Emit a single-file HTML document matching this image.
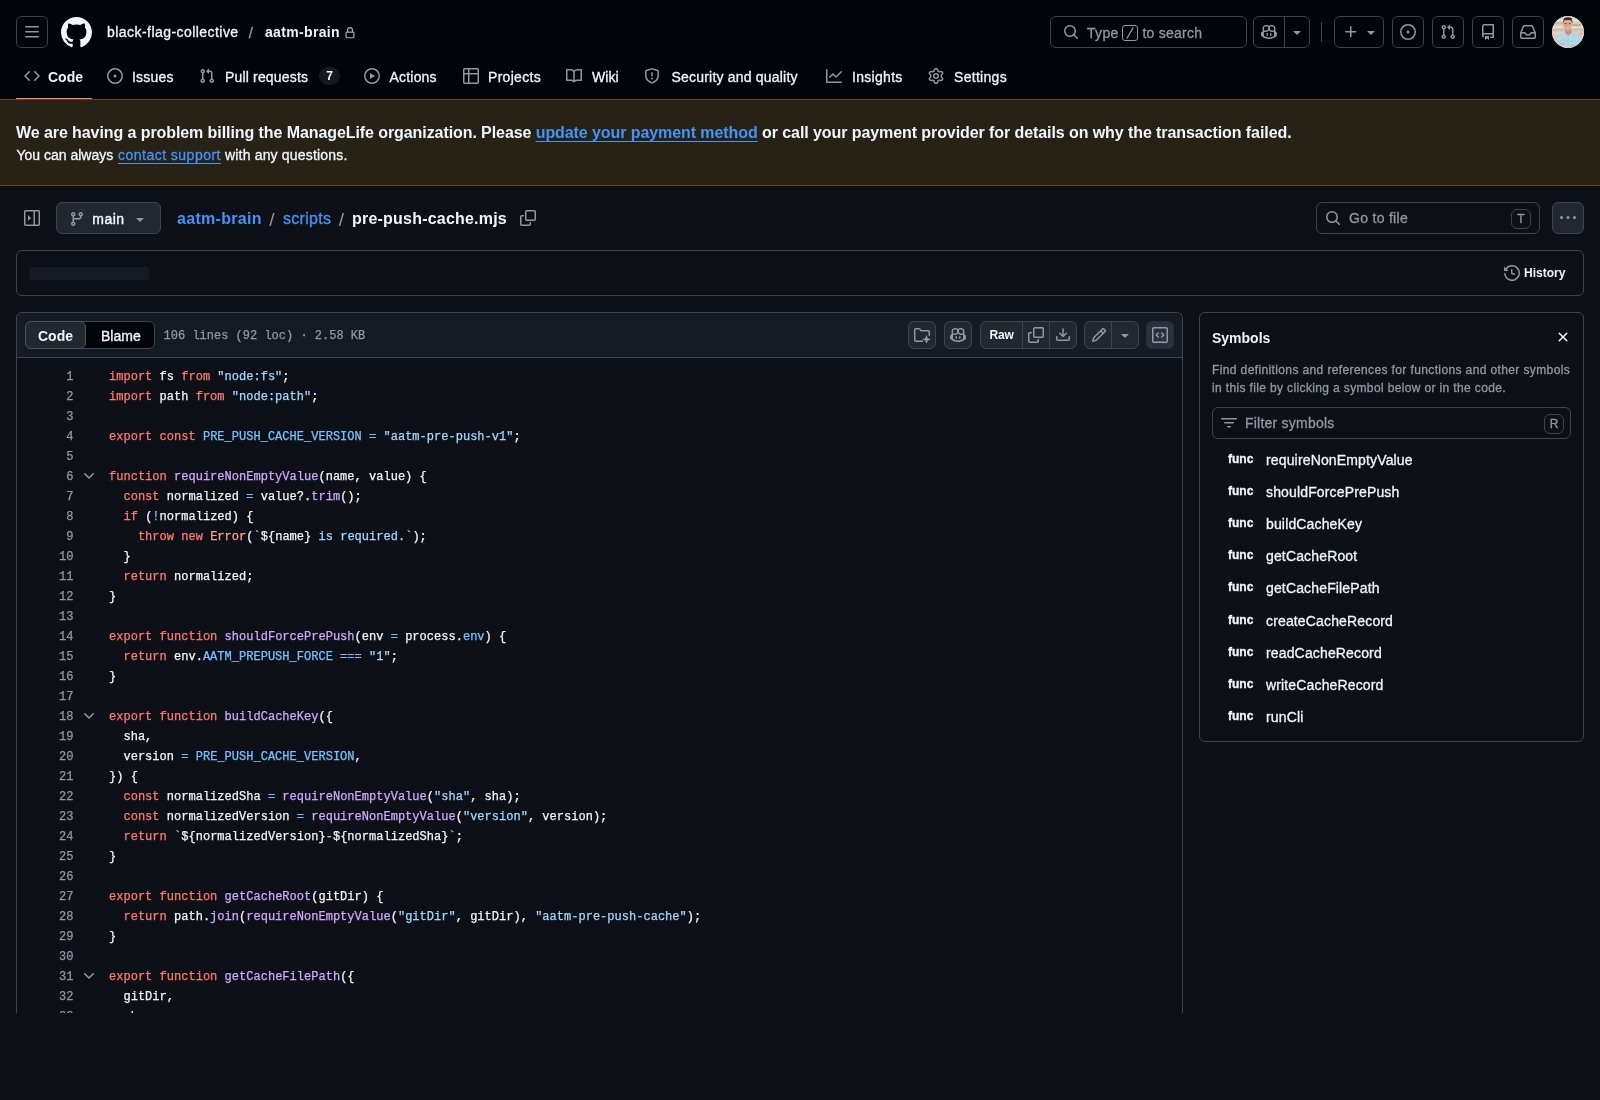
<!DOCTYPE html>
<html><head><meta charset="utf-8"><title>pre-push-cache.mjs</title>
<style>
*{box-sizing:border-box;margin:0;padding:0}
html,body{width:1600px;height:1100px;overflow:hidden;background:#0d1117;color:#f0f6fc;font-family:"Liberation Sans",sans-serif;font-size:14px;-webkit-text-stroke:.3px}
.abs{position:absolute}
svg{display:block;fill:currentColor}
.t{position:absolute;white-space:nowrap;line-height:20px}
.mut{color:#9198a1}
.b{font-weight:bold;-webkit-text-stroke:0}
.link{color:#4493f8}
/* header */
#hdr{position:absolute;left:0;top:0;width:1600px;height:99px;background:#010409}
.hbtn{position:absolute;top:16px;height:32px;border:1px solid #3d444d;border-radius:6px;color:#9198a1}
.hbtn svg{position:absolute}
.nav{position:absolute;top:66px;height:20px;line-height:20px;white-space:nowrap;color:#f0f6fc}
.nav svg{position:absolute;top:2px;color:#9198a1}
.nav span{top:1px}
/* banner */
#ban{position:absolute;left:0;top:99px;width:1600px;height:87px;background:#272215;border-top:1px solid #634814;border-bottom:1px solid #634814}
/* generic box */
.box{position:absolute;border:1px solid #3d444d;border-radius:6px}
.btn{position:absolute;background:#212830;border:1px solid #3d444d;border-radius:6px}
.kbd{position:absolute;border:1px solid #3d444d;border-radius:4px;color:#9198a1;font-size:11px;text-align:center}
/* code */
#code{position:absolute;left:16px;top:312px;width:1167px;height:701px;border:1px solid #3d444d;border-bottom:none;border-radius:6px 6px 0 0;overflow:hidden}
#chead{position:absolute;left:0;top:0;width:1165px;height:45px;background:#151b23;border-bottom:1px solid #3d444d}
pre{font-family:"Liberation Mono",monospace;font-size:12px;line-height:20px;-webkit-text-stroke:.25px}
#ln{position:absolute;left:0;top:54px;width:56.5px;text-align:right;color:#9198a1}
#src{position:absolute;left:92px;top:54px;color:#f0f6fc;letter-spacing:0.02px}
.e{color:#ffa198}.k{color:#ff7b72}.s{color:#a5d6ff}.c{color:#79c0ff}.f{color:#d2a8ff}
.chev{position:absolute;left:64px;color:#9198a1}
.ib{position:absolute;top:8px;height:28px;background:#212830;border:1px solid #3d444d;border-radius:6px;color:#9198a1}
.ib svg{position:absolute;top:5px}
/* symbols */
#sym{position:absolute;left:1199px;top:312px;width:385px;height:430px;border:1px solid #3d444d;border-radius:6px}
.fn{position:absolute;left:28px;font-size:12px;font-weight:bold;line-height:20px}
.sn{position:absolute;left:66px;font-size:14px;line-height:20px;white-space:nowrap;letter-spacing:.15px}
</style></head><body>
<div id="root" style="position:absolute;left:0;top:0;width:1600px;height:1100px;will-change:transform">

<!-- HEADER -->
<div id="hdr">
  <div class="hbtn" style="left:16px;width:32px"><svg style="left:7px;top:7px" width="16" height="16" viewBox="0 0 16 16"><path d="M1 2.75A.75.75 0 0 1 1.750 2h12.500a.75.75 0 0 1 0 1.500H1.750A.75.75 0 0 1 1 2.750Zm0 5A.75.75 0 0 1 1.750 7h12.500a.75.75 0 0 1 0 1.500H1.750A.75.75 0 0 1 1 7.750ZM1.750 12h12.500a.75.75 0 0 1 0 1.500H1.750a.75.75 0 0 1 0-1.500Z"/></svg></div>
  <svg class="abs" style="left:60.500px;top:17px;color:#f0f6fc" width="31" height="31" viewBox="0 0 16 16"><path d="M8 0c4.42 0 8 3.58 8 8a8.013 8.013 0 0 1-5.450 7.590c-.4.080-.550-.170-.550-.380 0-.270.010-1.130.010-2.200 0-.750-.250-1.230-.540-1.480 1.780-.2 3.650-.880 3.650-3.950 0-.880-.310-1.590-.820-2.150.080-.2.360-1.020-.080-2.120 0 0-.670-.220-2.200.820-.640-.180-1.320-.270-2-.270-.680 0-1.360.090-2 .270-1.530-1.030-2.200-.820-2.200-.820-.440 1.100-.160 1.920-.080 2.120-.510.560-.820 1.280-.820 2.150 0 3.060 1.860 3.750 3.640 3.950-.230.2-.440.550-.510 1.070-.460.210-1.610.550-2.330-.660-.150-.240-.6-.830-1.230-.820-.670.010-.270.380.010.530.340.190.730.9.820 1.130.160.450.680 1.310 2.690.940 0 .670.010 1.300.010 1.490 0 .210-.150.450-.550.380A7.995 7.995 0 0 1 0 8c0-4.420 3.580-8 8-8Z"/></svg>
  <div class="t" style="left:107px;top:22px;letter-spacing:.45px">black-flag-collective</div>
  <div class="t mut" style="left:248.700px;top:22.500px;font-size:15px">/</div>
  <div class="t b" style="left:265px;top:22px;letter-spacing:.33px">aatm-brain</div>
  <svg class="abs" style="left:344px;top:26.500px;color:#a9b0ba" width="12" height="12" viewBox="0 0 16 16"><path d="M4 4a4 4 0 0 1 8 0v2h.250c.966 0 1.750.784 1.750 1.750v5.500A1.750 1.750 0 0 1 12.250 15h-8.500A1.750 1.750 0 0 1 2 13.250v-5.500C2 6.784 2.784 6 3.750 6H4Zm8.250 3.500h-8.500a.25.25 0 0 0-.250.250v5.500c0 .138.112.250.250.250h8.500a.25.25 0 0 0 .250-.250v-5.500a.25.25 0 0 0-.250-.250ZM10.500 6V4a2.500 2.500 0 1 0-5 0v2Z"/></svg>

  <!-- search -->
  <div class="hbtn" style="left:1050px;width:197px">
    <svg style="left:12px;top:7px" width="16" height="16" viewBox="0 0 16 16"><path d="M10.680 11.740a6 6 0 0 1-7.922-8.982 6 6 0 0 1 8.982 7.922l3.040 3.040a.749.749 0 0 1-.326 1.275.749.749 0 0 1-.734-.215ZM11.500 7a4.499 4.499 0 1 0-8.997 0A4.499 4.499 0 0 0 11.500 7Z"/></svg>
    <div class="t" style="left:36px;top:6px;letter-spacing:.33px">Type</div>
    <div class="kbd" style="left:71px;top:8px;width:16px;height:16px;line-height:14px;border-color:#9198a1;border-radius:3px;font-size:13px"><svg width="14" height="14" viewBox="0 0 14 14" style="position:absolute;left:0;top:0"><path d="M4 12.300 L10 1.900" stroke="#9198a1" stroke-width="1.250" fill="none" stroke-linecap="round"/></svg></div>
    <div class="t" style="left:91.4px;top:6px;letter-spacing:.25px">to search</div>
  </div>
  <!-- copilot group -->
  <div class="hbtn" style="left:1253px;width:57px">
    <div class="abs" style="left:30px;top:0;width:1px;height:30px;background:#3d444d"></div>
    <svg style="left:7px;top:7px" width="16" height="16" viewBox="0 0 16 16"><path d="M7.998 15.035c-4.562 0-7.873-2.914-7.998-3.749V9.338c.085-.628.677-1.686 1.588-2.065.013-.07.024-.143.036-.218.029-.183.06-.384.126-.612-.201-.508-.254-1.084-.254-1.656 0-.87.128-1.769.693-2.484.579-.733 1.494-1.124 2.724-1.261 1.206-.134 2.262.034 2.944.765.05.053.096.108.139.165.044-.057.094-.112.143-.165.682-.731 1.738-.899 2.944-.765 1.230.137 2.145.528 2.724 1.261.566.715.693 1.614.693 2.484 0 .572-.053 1.148-.254 1.656.066.228.098.429.126.612.012.076.024.148.037.218.924.385 1.522 1.471 1.591 2.095v1.872c0 .766-3.351 3.795-8.002 3.795Zm0-1.485c2.280 0 4.584-1.110 5.002-1.433V7.862l-.023-.116c-.49.21-1.075.291-1.727.291-1.146 0-2.059-.327-2.710-.991A3.222 3.222 0 0 1 8 6.303a3.240 3.240 0 0 1-.544.743c-.65.664-1.563.991-2.710.991-.652 0-1.236-.081-1.727-.291l-.023.116v4.255c.419.323 2.722 1.433 5.002 1.433ZM6.762 2.830c-.193-.206-.637-.413-1.682-.297-1.019.113-1.479.404-1.713.7-.247.312-.369.789-.369 1.554 0 .793.129 1.171.308 1.371.162.181.519.379 1.442.379.853 0 1.339-.235 1.638-.54.315-.322.527-.827.617-1.553.117-.935-.037-1.395-.241-1.614Zm4.155-.297c-1.044-.116-1.488.091-1.681.297-.204.219-.359.679-.242 1.614.091.726.303 1.231.618 1.553.299.305.784.54 1.638.54.922 0 1.280-.198 1.442-.379.179-.2.308-.578.308-1.371 0-.765-.123-1.242-.37-1.554-.233-.296-.693-.587-1.713-.7Z"/><path d="M6.250 9.037a.75.75 0 0 1 .750.750v1.501a.75.75 0 0 1-1.500 0V9.787a.75.75 0 0 1 .750-.750Zm4.250.750v1.501a.75.75 0 0 1-1.500 0V9.787a.75.75 0 0 1 1.500 0Z"/></svg>
    <svg style="left:35px;top:7px" width="16" height="16" viewBox="0 0 16 16"><path d="m4.427 7.427 3.396 3.396a.25.25 0 0 0 .354 0l3.396-3.396A.25.25 0 0 0 11.396 7H4.604a.25.25 0 0 0-.177.427Z"/></svg>
  </div>
  <div class="abs" style="left:1321px;top:22px;width:1px;height:20px;background:#3d444d"></div>
  <!-- plus -->
  <div class="hbtn" style="left:1334px;width:50px">
    <svg style="left:8px;top:7px" width="16" height="16" viewBox="0 0 16 16"><path d="M7.750 2a.75.75 0 0 1 .750.750V7h4.250a.75.75 0 0 1 0 1.500H8.500v4.250a.75.75 0 0 1-1.500 0V8.500H2.750a.75.75 0 0 1 0-1.500H7V2.750A.75.75 0 0 1 7.750 2Z"/></svg>
    <svg style="left:28px;top:7px" width="16" height="16" viewBox="0 0 16 16"><path d="m4.427 7.427 3.396 3.396a.25.25 0 0 0 .354 0l3.396-3.396A.25.25 0 0 0 11.396 7H4.604a.25.25 0 0 0-.177.427Z"/></svg>
  </div>
  <div class="hbtn" style="left:1392px;width:32px"><svg style="left:7px;top:7px" width="16" height="16" viewBox="0 0 16 16"><path d="M8 9.500a1.500 1.500 0 1 0 0-3 1.500 1.500 0 0 0 0 3Z"/><path d="M8 0a8 8 0 1 1 0 16A8 8 0 0 1 8 0ZM1.500 8a6.500 6.500 0 1 0 13 0 6.500 6.500 0 0 0-13 0Z"/></svg></div>
  <div class="hbtn" style="left:1432px;width:32px"><svg style="left:7px;top:7px" width="16" height="16" viewBox="0 0 16 16"><path d="M1.500 3.250a2.250 2.250 0 1 1 3 2.122v5.256a2.251 2.251 0 1 1-1.500 0V5.372A2.250 2.250 0 0 1 1.500 3.250Zm5.677-.177L9.573.677A.25.25 0 0 1 10 .854V2.500h1A2.500 2.500 0 0 1 13.500 5v5.628a2.251 2.251 0 1 1-1.500 0V5a1 1 0 0 0-1-1h-1v1.646a.25.25 0 0 1-.427.177L7.177 3.427a.25.25 0 0 1 0-.354ZM3.750 2.500a.75.75 0 1 0 0 1.500.75.75 0 0 0 0-1.500Zm0 9.500a.75.75 0 1 0 0 1.500.75.75 0 0 0 0-1.500Zm8.250.750a.75.75 0 1 0 1.500 0 .75.75 0 0 0-1.500 0Z"/></svg></div>
  <div class="hbtn" style="left:1472px;width:32px"><svg style="left:7px;top:7px" width="16" height="16" viewBox="0 0 16 16"><path d="M2 2.500A2.500 2.500 0 0 1 4.500 0h8.750a.75.75 0 0 1 .750.750v12.500a.75.75 0 0 1-.750.750h-2.500a.75.75 0 0 1 0-1.500h1.750v-2h-8a1 1 0 0 0-.714 1.700.75.75 0 1 1-1.072 1.050A2.495 2.495 0 0 1 2 11.500Zm10.500-1h-8a1 1 0 0 0-1 1v6.708A2.486 2.486 0 0 1 4.500 9h8ZM5 12.250a.25.25 0 0 1 .250-.250h3.500a.25.25 0 0 1 .250.250v3.250a.25.25 0 0 1-.4.2l-1.450-1.087a.249.249 0 0 0-.3 0L5.400 15.700a.25.25 0 0 1-.4-.2Z"/></svg></div>
  <div class="hbtn" style="left:1512px;width:32px"><svg style="left:7px;top:7px" width="16" height="16" viewBox="0 0 16 16"><path d="M2.800 2.060A1.750 1.750 0 0 1 4.410 1h7.180c.7 0 1.333.417 1.610 1.060l2.740 6.395c.04.093.06.194.06.295v4.500A1.750 1.750 0 0 1 14.250 15H1.750A1.750 1.750 0 0 1 0 13.250v-4.500c0-.101.020-.202.060-.295Zm1.610.440a.25.25 0 0 0-.230.152L1.887 8H4.750a.75.75 0 0 1 .6.3L6.625 10h2.750l1.275-1.700a.75.75 0 0 1 .6-.3h2.863L11.820 2.652a.25.25 0 0 0-.230-.152Zm10.090 7h-2.875l-1.275 1.700a.75.75 0 0 1-.6.3h-3.500a.75.75 0 0 1-.6-.3L4.375 9.500H1.500v3.750c0 .138.112.250.250.250h12.500a.25.25 0 0 0 .250-.250Z"/></svg></div>
  <!-- avatar -->
  <svg class="abs" id="av" style="left:1552px;top:16px" width="32" height="32" viewBox="0 0 32 32"><defs><clipPath id="avc"><circle cx="16" cy="16" r="16"/></clipPath><filter id="avb" x="-10%" y="-10%" width="120%" height="120%"><feGaussianBlur stdDeviation="0.55"/></filter></defs>
<g clip-path="url(#avc)"><rect width="32" height="32" fill="#d6cbbb"/><g filter="url(#avb)">
<rect x="-2" y="-2" width="36" height="36" fill="#d6cbbb"/>
<rect x="0" y="3" width="32" height="2.500" fill="#e6dfd3"/><rect x="0" y="6.500" width="12" height="1" fill="#b9a794"/><rect x="20" y="8.500" width="9" height="1.200" fill="#a89684"/><rect x="0" y="10" width="32" height="2" fill="#e2dacd"/><rect x="0" y="13.500" width="32" height="1" fill="#c4b5a2"/><rect x="0" y="16" width="32" height="3" fill="#ddd3c5"/><rect x="26.500" y="16.500" width="3.500" height="2.500" fill="#dcae80" opacity=".7"/><rect x="5" y="21" width="2" height="1.500" fill="#dcae80" opacity=".5"/>
<path d="M3 32 L4.500 22 Q6 17.500 11 16.500 L13.500 15.500 L18.500 15 L22 16.500 Q27.500 18 28.500 22 L30 32 Z" fill="#b4d7e6"/>
<path d="M13 13 L19 13 L19.500 17 L16.300 19.500 L13.200 17 Z" fill="#c98f78"/>
<ellipse cx="15.700" cy="9.300" rx="4.100" ry="5.600" fill="#dca58e"/>
<path d="M11.200 8 Q10.800 3 13 1.800 Q16 0.600 18.800 1.800 Q20.800 3 20.300 8 Q19.800 4.600 18.500 4.200 Q15.500 3.600 12.800 4.300 Q11.600 5 11.200 8 Z" fill="#3b2a22"/>
<path d="M13.400 11.600 Q15.800 13.600 18.200 11.600 Q15.800 12.400 13.400 11.600Z" fill="#f4ece6"/>
<rect x="12.600" y="7.300" width="2" height=".8" fill="#5a4034"/><rect x="16.800" y="7.300" width="2" height=".8" fill="#5a4034"/>
<path d="M16.300 19.500 L16.300 32" stroke="#9cc3d6" stroke-width=".6" fill="none"/>
<ellipse cx="10.500" cy="27.500" rx="3" ry="1.500" fill="#e3b5a2"/><ellipse cx="20.500" cy="30" rx="2.400" ry="1.300" fill="#e3b5a2"/>
<path d="M7 26 Q12 22 16 25" stroke="#9ec6d8" stroke-width=".7" fill="none"/><path d="M17 26 Q22 23 26 26" stroke="#9ec6d8" stroke-width=".7" fill="none"/>
</g></g></svg>

  <!-- NAV -->

  <div class="nav b" id="n1" style="left:24px;width:60px"><svg style="left:0" width="16" height="16" viewBox="0 0 16 16"><path d="m11.280 3.220 4.250 4.250a.75.75 0 0 1 0 1.060l-4.250 4.250a.749.749 0 0 1-1.275-.326.749.749 0 0 1 .215-.734L13.940 8l-3.720-3.720a.749.749 0 0 1 .326-1.275.749.749 0 0 1 .734.215Zm-6.560 0a.751.751 0 0 1 1.042.018.751.751 0 0 1 .018 1.042L2.060 8l3.720 3.720a.749.749 0 0 1-.326 1.275.749.749 0 0 1-.734-.215L.470 8.530a.75.75 0 0 1 0-1.060Z"/></svg><span class="abs" style="left:24px">Code</span></div>
  <div class="nav" id="n2" style="left:107px"><svg style="left:0" width="16" height="16" viewBox="0 0 16 16"><path d="M8 9.500a1.500 1.500 0 1 0 0-3 1.500 1.500 0 0 0 0 3Z"/><path d="M8 0a8 8 0 1 1 0 16A8 8 0 0 1 8 0ZM1.500 8a6.500 6.500 0 1 0 13 0 6.500 6.500 0 0 0-13 0Z"/></svg><span class="abs" style="left:25px;letter-spacing:.23px">Issues</span></div>
  <div class="nav" id="n3" style="left:199px"><svg style="left:0" width="16" height="16" viewBox="0 0 16 16"><path d="M1.500 3.250a2.250 2.250 0 1 1 3 2.122v5.256a2.251 2.251 0 1 1-1.500 0V5.372A2.250 2.250 0 0 1 1.500 3.250Zm5.677-.177L9.573.677A.25.25 0 0 1 10 .854V2.500h1A2.500 2.500 0 0 1 13.500 5v5.628a2.251 2.251 0 1 1-1.500 0V5a1 1 0 0 0-1-1h-1v1.646a.25.25 0 0 1-.427.177L7.177 3.427a.25.25 0 0 1 0-.354ZM3.750 2.500a.75.75 0 1 0 0 1.500.75.75 0 0 0 0-1.500Zm0 9.500a.75.75 0 1 0 0 1.500.75.75 0 0 0 0-1.500Zm8.250.750a.75.75 0 1 0 1.500 0 .75.75 0 0 0-1.500 0Z"/></svg><span class="abs" style="left:26px;letter-spacing:.17px">Pull requests</span>
    <span class="abs b" style="left:120px;top:1px;width:21px;height:18px;border-radius:9px;background:#151a21;font-size:12px;text-align:center;line-height:18px">7</span></div>
  <div class="nav" id="n4" style="left:364px"><svg style="left:0" width="16" height="16" viewBox="0 0 16 16"><path d="M8 0a8 8 0 1 1 0 16A8 8 0 0 1 8 0ZM1.500 8a6.500 6.500 0 1 0 13 0 6.500 6.500 0 0 0-13 0Zm4.879-2.773 4.264 2.559a.25.25 0 0 1 0 .428l-4.264 2.559A.25.25 0 0 1 6 10.559V5.442a.25.25 0 0 1 .379-.215Z"/></svg><span class="abs" style="left:25.5px;letter-spacing:.2px">Actions</span></div>
  <div class="nav" id="n5" style="left:463px"><svg style="left:0" width="16" height="16" viewBox="0 0 16 16"><path d="M0 1.750C0 .784.784 0 1.750 0h12.500C15.216 0 16 .784 16 1.750v12.500A1.750 1.750 0 0 1 14.250 16H1.750A1.750 1.750 0 0 1 0 14.250ZM6.500 6.500v8h7.750a.25.25 0 0 0 .250-.250V6.500Zm8-1.500V1.750a.25.25 0 0 0-.250-.250H6.500V5Zm-13 1.500v7.750c0 .138.112.250.250.250H5v-8ZM5 5V1.500H1.750a.25.25 0 0 0-.250.250V5Z"/></svg><span class="abs" style="left:25px;letter-spacing:.3px">Projects</span></div>
  <div class="nav" id="n6" style="left:566px"><svg style="left:0" width="16" height="16" viewBox="0 0 16 16"><path d="M0 1.750A.75.75 0 0 1 .750 1h4.253c1.227 0 2.317.590 3 1.501A3.743 3.743 0 0 1 11.006 1h4.245a.75.75 0 0 1 .750.750v10.500a.75.75 0 0 1-.750.750h-4.507a2.250 2.250 0 0 0-1.591.659l-.622.621a.75.75 0 0 1-1.060 0l-.622-.621A2.250 2.250 0 0 0 5.258 13H.750a.75.75 0 0 1-.750-.750Zm7.251 10.324.004-5.073-.002-2.253A2.250 2.250 0 0 0 5.003 2.500H1.500v9h3.757a3.750 3.750 0 0 1 1.994.574ZM8.755 4.750l-.004 7.322a3.752 3.752 0 0 1 1.992-.572H14.500v-9h-3.495a2.250 2.250 0 0 0-2.250 2.250Z"/></svg><span class="abs" style="left:26px;letter-spacing:.1px">Wiki</span></div>
  <div class="nav" id="n7" style="left:644px"><svg style="left:0" width="16" height="16" viewBox="0 0 16 16"><path d="M7.467.133a1.748 1.748 0 0 1 1.066 0l5.250 1.680A1.750 1.750 0 0 1 15 3.480V7c0 1.566-.32 3.182-1.303 4.682-.983 1.498-2.585 2.813-5.032 3.855a1.697 1.697 0 0 1-1.330 0c-2.447-1.042-4.049-2.357-5.032-3.855C1.320 10.182 1 8.566 1 7V3.480a1.750 1.750 0 0 1 1.217-1.667Zm.610 1.429a.25.25 0 0 0-.153 0l-5.250 1.680a.25.25 0 0 0-.174.238V7c0 1.358.275 2.666 1.057 3.860.784 1.194 2.121 2.340 4.366 3.297a.196.196 0 0 0 .154 0c2.245-.956 3.582-2.104 4.366-3.298C13.225 9.666 13.500 8.360 13.500 7V3.480a.251.251 0 0 0-.174-.237l-5.250-1.680ZM8.750 4.750v3a.75.75 0 0 1-1.500 0v-3a.75.75 0 0 1 1.500 0ZM9 10.500a1 1 0 1 1-2 0 1 1 0 0 1 2 0Z"/></svg><span class="abs" style="left:27.5px;letter-spacing:.2px">Security and quality</span></div>
  <div class="nav" id="n8" style="left:826px"><svg style="left:0" width="16" height="16" viewBox="0 0 16 16"><path d="M1.500 1.750V13.500h13.750a.75.75 0 0 1 0 1.500H.750a.75.75 0 0 1-.750-.750V1.750a.75.75 0 0 1 1.500 0Zm14.280 2.530-5.250 5.250a.75.75 0 0 1-1.060 0L7 7.060 4.280 9.780a.751.751 0 0 1-1.042-.018.751.751 0 0 1-.018-1.042l3.250-3.250a.75.75 0 0 1 1.060 0L10 7.940l4.720-4.720a.751.751 0 0 1 1.042.018.751.751 0 0 1 .018 1.042Z"/></svg><span class="abs" style="left:26px;letter-spacing:.3px">Insights</span></div>
  <div class="nav" id="n9" style="left:928px"><svg style="left:0" width="16" height="16" viewBox="0 0 16 16"><path d="M8 0a8.200 8.200 0 0 1 .701.031C9.444.095 9.990.645 10.160 1.290l.288 1.107c.018.066.079.158.212.224.231.114.454.243.668.386.123.082.233.090.299.071l1.103-.303c.644-.176 1.392.021 1.820.630.270.385.506.792.704 1.218.315.675.111 1.422-.364 1.891l-.814.806c-.049.048-.098.147-.088.294.016.257.016.515 0 .772-.01.147.038.246.088.294l.814.806c.475.469.679 1.216.364 1.891a7.977 7.977 0 0 1-.704 1.217c-.428.610-1.176.807-1.820.630l-1.102-.302c-.067-.019-.177-.011-.3.071a5.909 5.909 0 0 1-.668.386c-.133.066-.194.158-.211.224l-.290 1.106c-.168.646-.715 1.196-1.458 1.260a8.006 8.006 0 0 1-1.402 0c-.743-.064-1.289-.614-1.458-1.260l-.289-1.106c-.018-.066-.079-.158-.212-.224a5.738 5.738 0 0 1-.668-.386c-.123-.082-.233-.090-.299-.071l-1.103.303c-.644.176-1.392-.021-1.820-.630a8.120 8.120 0 0 1-.704-1.218c-.315-.675-.111-1.422.363-1.891l.815-.806c.05-.048.098-.147.088-.294a6.214 6.214 0 0 1 0-.772c.01-.147-.038-.246-.088-.294l-.815-.806C.635 6.045.431 5.298.746 4.623a7.920 7.920 0 0 1 .704-1.217c.428-.610 1.176-.807 1.820-.630l1.102.302c.067.019.177.011.3-.071.214-.143.437-.272.668-.386.133-.066.194-.158.211-.224l.290-1.106C6.009.645 6.556.095 7.299.030 7.530.010 7.764 0 8 0Zm-.571 1.525c-.036.003-.108.036-.137.146l-.289 1.105c-.147.561-.549.967-.998 1.189-.173.086-.340.183-.5.290-.417.278-.970.423-1.529.270l-1.103-.303c-.109-.030-.175.016-.195.045-.220.312-.412.644-.573.990-.014.031-.021.110.059.190l.815.806c.411.406.562.957.530 1.456a4.709 4.709 0 0 0 0 .582c.032.499-.119 1.050-.530 1.456l-.815.806c-.081.080-.073.159-.059.190.162.346.353.677.573.989.020.030.085.076.195.046l1.102-.303c.560-.153 1.113-.008 1.530.270.161.107.328.204.501.290.447.222.850.629.997 1.189l.289 1.105c.029.109.101.143.137.146a6.600 6.600 0 0 0 1.142 0c.036-.003.108-.036.137-.146l.289-1.105c.147-.561.549-.967.998-1.189.173-.086.340-.183.5-.290.417-.278.970-.423 1.529-.270l1.103.303c.109.029.175-.016.195-.045.220-.313.411-.644.573-.990.014-.031.021-.110-.059-.190l-.815-.806c-.411-.406-.562-.957-.530-1.456a4.709 4.709 0 0 0 0-.582c-.032-.499.119-1.050.530-1.456l.815-.806c.081-.080.073-.159.059-.190a6.464 6.464 0 0 0-.573-.989c-.020-.030-.085-.076-.195-.046l-1.102.303c-.560.153-1.113.008-1.530-.270a4.440 4.440 0 0 0-.501-.290c-.447-.222-.850-.629-.997-1.189l-.289-1.105c-.029-.110-.101-.143-.137-.146a6.600 6.600 0 0 0-1.142 0ZM11 8a3 3 0 1 1-6 0 3 3 0 0 1 6 0ZM9.500 8a1.500 1.500 0 1 0-3.001.001A1.500 1.500 0 0 0 9.500 8Z"/></svg><span class="abs" style="left:26px;letter-spacing:.3px">Settings</span></div>
  <div class="abs" style="left:16px;top:97px;width:76px;height:1px;background:#000"></div><div class="abs" style="left:16px;top:98px;width:76px;height:1px;background:#f78166"></div>
</div>

<!-- BANNER -->
<div id="ban">
  <div class="t b" id="b1" style="left:16px;top:21px;font-size:16px;line-height:24px;letter-spacing:-.08px">We are having a problem billing the ManageLife organization. Please <span class="link" style="text-decoration:underline;text-decoration-thickness:1px;text-underline-offset:3px">update your payment method</span> or call your payment provider for details on why the transaction failed.</div>
  <div class="t" id="b2" style="left:16.500px;top:45px;font-size:14px;line-height:20px">You can always</div>
  <div class="t link" id="b2l" style="left:118px;top:45px;font-size:14px;line-height:20px;letter-spacing:.48px;text-decoration:underline;text-decoration-thickness:1px;text-underline-offset:3px">contact support</div>
  <div class="t" id="b2c" style="left:225px;top:45px;font-size:14px;line-height:20px;letter-spacing:.18px">with any questions.</div>
</div>

<!-- FILE HEADER ROW -->
<svg class="abs mut" style="left:24px;top:210px" width="16" height="16" viewBox="0 0 16 16"><path d="M6.823 7.823a.25.25 0 0 1 0 .354l-2.396 2.396A.25.25 0 0 1 4 10.396V5.604a.25.25 0 0 1 .427-.177Z"/><path d="M1.750 0h12.500C15.216 0 16 .784 16 1.750v12.500A1.750 1.750 0 0 1 14.250 16H1.750A1.750 1.750 0 0 1 0 14.250V1.750C0 .784.784 0 1.750 0ZM1.500 1.750v12.500c0 .138.112.250.250.250H9.500v-13H1.750a.25.25 0 0 0-.250.250ZM11 14.500h3.250a.25.25 0 0 0 .250-.250V1.750a.25.25 0 0 0-.250-.250H11Z"/></svg>
<div class="btn" style="left:56px;top:202px;width:105px;height:32px">
  <svg class="abs mut" style="left:12px;top:8px" width="16" height="16" viewBox="0 0 16 16"><path d="M9.500 3.250a2.250 2.250 0 1 1 3 2.122V6A2.500 2.500 0 0 1 10 8.500H6a1 1 0 0 0-1 1v1.128a2.251 2.251 0 1 1-1.500 0V5.372a2.250 2.250 0 1 1 1.500 0v1.836A2.493 2.493 0 0 1 6 7h4a1 1 0 0 0 1-1v-.628A2.250 2.250 0 0 1 9.500 3.250Zm-6 0a.75.75 0 1 0 1.500 0 .75.75 0 0 0-1.500 0Zm8.250-.750a.75.75 0 1 0 0 1.500.75.75 0 0 0 0-1.500ZM4.250 12a.75.75 0 1 0 0 1.500.75.75 0 0 0 0-1.500Z"/></svg>
  <div class="t" id="br" style="left:35.300px;top:5.500px;letter-spacing:.5px;-webkit-text-stroke:.4px">main</div>
  <svg class="abs mut" style="left:75px;top:8px" width="16" height="16" viewBox="0 0 16 16"><path d="m4.427 7.427 3.396 3.396a.25.25 0 0 0 .354 0l3.396-3.396A.25.25 0 0 0 11.396 7H4.604a.25.25 0 0 0-.177.427Z"/></svg>
</div>
<div class="t b link" id="p1" style="left:177px;top:207px;font-size:16px;line-height:24px;letter-spacing:.3px">aatm-brain</div>
<div class="t mut" id="sl1" style="left:269.300px;top:208px;font-size:19px;line-height:24px;-webkit-text-stroke:0">/</div>
<div class="t link" id="p2" style="left:283px;top:207px;font-size:16px;line-height:24px;letter-spacing:.28px">scripts</div>
<div class="t mut" id="sl2" style="left:338.800px;top:208px;font-size:19px;line-height:24px;-webkit-text-stroke:0">/</div>
<div class="t b" id="p3" style="left:352px;top:207px;font-size:16px;line-height:24px;letter-spacing:.21px">pre-push-cache.mjs</div>
<svg class="abs mut" style="left:520px;top:210px" width="16" height="16" viewBox="0 0 16 16"><path d="M0 6.750C0 5.784.784 5 1.750 5h1.500a.75.75 0 0 1 0 1.500h-1.500a.25.25 0 0 0-.250.250v7.500c0 .138.112.250.250.250h7.500a.25.25 0 0 0 .250-.250v-1.500a.75.75 0 0 1 1.500 0v1.500A1.750 1.750 0 0 1 9.250 16h-7.500A1.750 1.750 0 0 1 0 14.250Z"/><path d="M5 1.750C5 .784 5.784 0 6.750 0h7.500C15.216 0 16 .784 16 1.750v7.500A1.750 1.750 0 0 1 14.250 11h-7.500A1.750 1.750 0 0 1 5 9.250Zm1.750-.250a.25.25 0 0 0-.250.250v7.500c0 .138.112.250.250.250h7.500a.25.25 0 0 0 .250-.250v-7.500a.25.25 0 0 0-.250-.250Z"/></svg>

<div class="box" style="left:1316px;top:202px;width:224px;height:32px">
  <svg class="abs mut" style="left:8px;top:7px" width="16" height="16" viewBox="0 0 16 16"><path d="M10.680 11.740a6 6 0 0 1-7.922-8.982 6 6 0 0 1 8.982 7.922l3.040 3.040a.749.749 0 0 1-.326 1.275.749.749 0 0 1-.734-.215ZM11.500 7a4.499 4.499 0 1 0-8.997 0A4.499 4.499 0 0 0 11.500 7Z"/></svg>
  <div class="t mut" id="gt" style="left:32px;top:5px;letter-spacing:.3px">Go to file</div>
  <div class="kbd" style="left:194px;top:6px;width:20px;height:20px;line-height:18px;font-size:12px;border-radius:6px">T</div>
</div>
<div class="btn" style="left:1552px;top:202px;width:32px;height:32px"><svg class="abs mut" style="left:7px;top:7px" width="16" height="16" viewBox="0 0 16 16"><path d="M8 9a1.500 1.500 0 1 0 0-3 1.500 1.500 0 0 0 0 3ZM1.500 9a1.500 1.500 0 1 0 0-3 1.500 1.500 0 0 0 0 3Zm13 0a1.500 1.500 0 1 0 0-3 1.500 1.500 0 0 0 0 3Z"/></svg></div>

<!-- COMMIT BOX -->
<div class="box" style="left:16px;top:250px;width:1568px;height:46px">
  <div class="abs" style="left:12px;top:15.500px;width:120px;height:13px;border-radius:3px;background:#151b23"></div>
  <svg class="abs mut" style="left:1487px;top:14px" width="16" height="16" viewBox="0 0 16 16"><path d="m.427 1.927 1.215 1.215a8.002 8.002 0 1 1-1.600 5.685.75.75 0 1 1 1.493-.154 6.500 6.500 0 1 0 1.180-4.458l1.358 1.358A.25.25 0 0 1 3.896 6H.250A.25.25 0 0 1 0 5.750V2.104a.25.25 0 0 1 .427-.177ZM7.750 4a.75.75 0 0 1 .750.750v2.992l2.028.812a.75.75 0 0 1-.557 1.392l-2.500-1A.751.751 0 0 1 7 8.250v-3.500A.75.75 0 0 1 7.750 4Z"/></svg>
  <div class="t b" id="hi" style="left:1507px;top:12px;font-size:12px">History</div>
</div>

<!-- CODE BOX -->
<div id="code">
  <div id="chead">
    <div class="abs" style="left:8px;top:8px;width:130px;height:28px;border-radius:6px;background:#010409;border:1px solid #3d444d"></div>
    <div class="abs" style="left:8px;top:8px;width:61px;height:28px;border-radius:6px;background:#212830;border:1px solid #4a525c"></div>
    <div class="t b" id="sc" style="left:21px;top:13px">Code</div>
    <div class="t" id="sb" style="left:84px;top:13px;-webkit-text-stroke:.35px">Blame</div>
    <pre class="t mut" id="meta" style="left:146.600px;top:13px">106 lines (92 loc) · 2.58 KB</pre>

    <div class="ib" style="left:891px;width:28px"><svg style="left:5px" width="16" height="16" viewBox="0 0 16 16"><path d="M1.750 1A1.750 1.750 0 0 0 0 2.750v10.500C0 14.216.784 15 1.750 15H8.500a.75.75 0 0 0 0-1.500H1.750a.25.25 0 0 1-.250-.250V2.750a.25.25 0 0 1 .250-.250H5c.079 0 .153.037.2.1l.9 1.200c.330.440.850.700 1.400.700h6.750a.25.25 0 0 1 .250.250V8.500a.75.75 0 0 0 1.500 0V4.750A1.750 1.750 0 0 0 14.250 3H7.500a.25.25 0 0 1-.2-.1l-.9-1.200C6.070 1.260 5.550 1 5 1Z"/><path d="M12.500 8.400c.22 0 .41.140.47.350l.5 1.760c.13.440.47.780.91.910l1.760.5a.49.49 0 0 1 0 .94l-1.760.5c-.44.130-.78.470-.91.910l-.5 1.760a.49.49 0 0 1-.94 0l-.5-1.760a1.330 1.330 0 0 0-.91-.91l-1.760-.5a.49.49 0 0 1 0-.94l1.760-.5c.44-.13.780-.47.910-.91l.5-1.760a.49.49 0 0 1 .47-.35Z"/></svg></div>
    <div class="ib" style="left:927px;width:28px"><svg style="left:5px" width="16" height="16" viewBox="0 0 16 16"><path d="M7.998 15.035c-4.562 0-7.873-2.914-7.998-3.749V9.338c.085-.628.677-1.686 1.588-2.065.013-.07.024-.143.036-.218.029-.183.06-.384.126-.612-.201-.508-.254-1.084-.254-1.656 0-.87.128-1.769.693-2.484.579-.733 1.494-1.124 2.724-1.261 1.206-.134 2.262.034 2.944.765.05.053.096.108.139.165.044-.057.094-.112.143-.165.682-.731 1.738-.899 2.944-.765 1.230.137 2.145.528 2.724 1.261.566.715.693 1.614.693 2.484 0 .572-.053 1.148-.254 1.656.066.228.098.429.126.612.012.076.024.148.037.218.924.385 1.522 1.471 1.591 2.095v1.872c0 .766-3.351 3.795-8.002 3.795Zm0-1.485c2.280 0 4.584-1.110 5.002-1.433V7.862l-.023-.116c-.49.21-1.075.291-1.727.291-1.146 0-2.059-.327-2.710-.991A3.222 3.222 0 0 1 8 6.303a3.240 3.240 0 0 1-.544.743c-.65.664-1.563.991-2.710.991-.652 0-1.236-.081-1.727-.291l-.023.116v4.255c.419.323 2.722 1.433 5.002 1.433ZM6.762 2.830c-.193-.206-.637-.413-1.682-.297-1.019.113-1.479.404-1.713.7-.247.312-.369.789-.369 1.554 0 .793.129 1.171.308 1.371.162.181.519.379 1.442.379.853 0 1.339-.235 1.638-.54.315-.322.527-.827.617-1.553.117-.935-.037-1.395-.241-1.614Zm4.155-.297c-1.044-.116-1.488.091-1.681.297-.204.219-.359.679-.242 1.614.091.726.303 1.231.618 1.553.299.305.784.54 1.638.54.922 0 1.280-.198 1.442-.379.179-.2.308-.578.308-1.371 0-.765-.123-1.242-.37-1.554-.233-.296-.693-.587-1.713-.7Z"/><path d="M6.250 9.037a.75.75 0 0 1 .750.750v1.501a.75.75 0 0 1-1.500 0V9.787a.75.75 0 0 1 .750-.750Zm4.250.750v1.501a.75.75 0 0 1-1.500 0V9.787a.75.75 0 0 1 1.500 0Z"/></svg></div>
    <div class="ib" style="left:963px;width:97px">
      <div class="t b" id="raw" style="left:8.5px;top:3px;font-size:12px;color:#f0f6fc;letter-spacing:-.2px">Raw</div>
      <div class="abs" style="left:41px;top:0;width:1px;height:26px;background:#3d444d"></div>
      <svg style="left:47px" width="16" height="16" viewBox="0 0 16 16"><path d="M0 6.750C0 5.784.784 5 1.750 5h1.500a.75.75 0 0 1 0 1.500h-1.500a.25.25 0 0 0-.250.250v7.500c0 .138.112.250.250.250h7.500a.25.25 0 0 0 .250-.250v-1.500a.75.75 0 0 1 1.500 0v1.500A1.750 1.750 0 0 1 9.250 16h-7.500A1.750 1.750 0 0 1 0 14.250Z"/><path d="M5 1.750C5 .784 5.784 0 6.750 0h7.500C15.216 0 16 .784 16 1.750v7.500A1.750 1.750 0 0 1 14.250 11h-7.500A1.750 1.750 0 0 1 5 9.250Zm1.750-.250a.25.25 0 0 0-.250.250v7.500c0 .138.112.250.250.250h7.500a.25.25 0 0 0 .250-.250v-7.500a.25.25 0 0 0-.250-.250Z"/></svg>
      <div class="abs" style="left:68px;top:0;width:1px;height:26px;background:#3d444d"></div>
      <svg style="left:74px" width="16" height="16" viewBox="0 0 16 16"><path d="M2.750 14A1.750 1.750 0 0 1 1 12.250v-2.500a.75.75 0 0 1 1.500 0v2.500c0 .138.112.250.250.250h10.500a.25.25 0 0 0 .250-.250v-2.500a.75.75 0 0 1 1.500 0v2.500A1.750 1.750 0 0 1 13.250 14Z"/><path d="M7.250 7.689V2a.75.75 0 0 1 1.500 0v5.689l1.970-1.969a.749.749 0 1 1 1.060 1.060l-3.250 3.250a.749.749 0 0 1-1.060 0L4.220 6.780a.749.749 0 1 1 1.060-1.060l1.970 1.969Z"/></svg>
    </div>
    <div class="ib" style="left:1067px;width:55px">
      <svg style="left:6px" width="16" height="16" viewBox="0 0 16 16"><path d="M11.013 1.427a1.750 1.750 0 0 1 2.474 0l1.086 1.086a1.750 1.750 0 0 1 0 2.474l-8.610 8.610c-.21.21-.47.364-.756.445l-3.251.930a.75.75 0 0 1-.927-.928l.929-3.250c.081-.286.235-.547.445-.758l8.610-8.610Zm.176 4.823L9.750 4.810l-6.286 6.287a.253.253 0 0 0-.064.108l-.558 1.953 1.953-.558a.253.253 0 0 0 .108-.064Zm1.238-3.763a.25.25 0 0 0-.354 0L10.811 3.750l1.439 1.440 1.263-1.263a.25.25 0 0 0 0-.354Z"/></svg>
      <div class="abs" style="left:26px;top:0;width:1px;height:26px;background:#3d444d"></div>
      <svg style="left:32px" width="16" height="16" viewBox="0 0 16 16"><path d="m4.427 7.427 3.396 3.396a.25.25 0 0 0 .354 0l3.396-3.396A.25.25 0 0 0 11.396 7H4.604a.25.25 0 0 0-.177.427Z"/></svg>
    </div>
    <div class="ib" style="left:1129px;width:28px;background:#2a313c;border-color:#2a313c"><svg style="left:5px" width="16" height="16" viewBox="0 0 16 16"><path d="M0 1.750C0 .784.784 0 1.750 0h12.500C15.216 0 16 .784 16 1.750v12.500A1.750 1.750 0 0 1 14.250 16H1.750A1.750 1.750 0 0 1 0 14.250Zm1.750-.250a.25.25 0 0 0-.250.250v12.500c0 .138.112.250.250.250h12.500a.25.25 0 0 0 .250-.250V1.750a.25.25 0 0 0-.250-.250Zm7.470 3.970a.75.75 0 0 1 1.060 0l2 2a.75.75 0 0 1 0 1.060l-2 2a.749.749 0 0 1-1.275-.326.749.749 0 0 1 .215-.734L10.690 8 9.220 6.530a.75.75 0 0 1 0-1.060ZM6.780 6.530 5.310 8l1.470 1.470a.749.749 0 0 1-.326 1.275.749.749 0 0 1-.734-.215l-2-2a.75.75 0 0 1 0-1.060l2-2a.751.751 0 0 1 1.042.018.751.751 0 0 1 .018 1.042Z"/></svg></div>
  </div>
  <pre id="ln">1
2
3
4
5
6
7
8
9
10
11
12
13
14
15
16
17
18
19
20
21
22
23
24
25
26
27
28
29
30
31
32
33
34</pre>
  <div class="chev" style="top:155px"><svg width="16" height="16" viewBox="0 0 16 16"><path d="M12.780 5.220a.749.749 0 0 1 0 1.060l-4.250 4.250a.749.749 0 0 1-1.060 0L3.220 6.280a.749.749 0 1 1 1.060-1.060L8 8.939l3.720-3.719a.749.749 0 0 1 1.060 0Z"/></svg></div><div class="chev" style="top:395px"><svg width="16" height="16" viewBox="0 0 16 16"><path d="M12.780 5.220a.749.749 0 0 1 0 1.060l-4.250 4.250a.749.749 0 0 1-1.060 0L3.220 6.280a.749.749 0 1 1 1.060-1.060L8 8.939l3.720-3.719a.749.749 0 0 1 1.060 0Z"/></svg></div><div class="chev" style="top:655px"><svg width="16" height="16" viewBox="0 0 16 16"><path d="M12.780 5.220a.749.749 0 0 1 0 1.060l-4.250 4.250a.749.749 0 0 1-1.060 0L3.220 6.280a.749.749 0 1 1 1.060-1.060L8 8.939l3.720-3.719a.749.749 0 0 1 1.060 0Z"/></svg></div>
  <pre id="src"><span class="k">import</span> fs <span class="k">from</span> <span class="s">"node:fs"</span>;
<span class="k">import</span> path <span class="k">from</span> <span class="s">"node:path"</span>;

<span class="k">export</span> <span class="k">const</span> <span class="c">PRE_PUSH_CACHE_VERSION</span> <span class="c">=</span> <span class="s">"aatm-pre-push-v1"</span>;

<span class="k">function</span> <span class="f">requireNonEmptyValue</span>(name, value) {
  <span class="k">const</span> normalized <span class="c">=</span> value?.<span class="f">trim</span>();
  <span class="k">if</span> (<span class="c">!</span>normalized) {
    <span class="k">throw</span> <span class="k">new</span> <span class="e">Error</span>(<span class="s">`</span>${name}<span class="s"> is required.`</span>);
  }
  <span class="k">return</span> normalized;
}

<span class="k">export</span> <span class="k">function</span> <span class="f">shouldForcePrePush</span>(env <span class="c">=</span> process.<span class="c">env</span>) {
  <span class="k">return</span> env.<span class="c">AATM_PREPUSH_FORCE</span> <span class="c">===</span> <span class="s">"1"</span>;
}

<span class="k">export</span> <span class="k">function</span> <span class="f">buildCacheKey</span>({
  sha,
  version <span class="c">=</span> <span class="c">PRE_PUSH_CACHE_VERSION</span>,
}) {
  <span class="k">const</span> normalizedSha <span class="c">=</span> <span class="f">requireNonEmptyValue</span>(<span class="s">"sha"</span>, sha);
  <span class="k">const</span> normalizedVersion <span class="c">=</span> <span class="f">requireNonEmptyValue</span>(<span class="s">"version"</span>, version);
  <span class="k">return</span> <span class="s">`</span>${normalizedVersion}<span class="s">-</span>${normalizedSha}<span class="s">`</span>;
}

<span class="k">export</span> <span class="k">function</span> <span class="f">getCacheRoot</span>(gitDir) {
  <span class="k">return</span> path.<span class="f">join</span>(<span class="f">requireNonEmptyValue</span>(<span class="s">"gitDir"</span>, gitDir), <span class="s">"aatm-pre-push-cache"</span>);
}

<span class="k">export</span> <span class="k">function</span> <span class="f">getCacheFilePath</span>({
  gitDir,
  sha,
  version,</pre>
</div>

<!-- SYMBOLS -->
<div id="sym">
  <div class="t b" id="st" style="left:12px;top:15px;font-size:14px">Symbols</div>
  <svg class="abs" style="left:355px;top:16px;color:#f0f6fc" width="16" height="16" viewBox="0 0 16 16"><path d="M3.720 3.720a.75.75 0 0 1 1.060 0L8 6.940l3.220-3.220a.749.749 0 0 1 1.275.326.749.749 0 0 1-.215.734L9.060 8l3.220 3.220a.749.749 0 0 1-.326 1.275.749.749 0 0 1-.734-.215L8 9.060l-3.220 3.220a.751.751 0 0 1-1.042-.018.751.751 0 0 1-.018-1.042L6.940 8 3.720 4.780a.75.75 0 0 1 0-1.060Z"/></svg>
  <div class="t mut" id="d1" style="left:12px;top:48px;font-size:12px;line-height:18px;letter-spacing:.38px">Find definitions and references for functions and other symbols</div>
  <div class="t mut" id="d2" style="left:12px;top:66px;font-size:12px;line-height:18px;letter-spacing:.36px">in this file by clicking a symbol below or in the code.</div>
  <div class="box" style="left:12px;top:94px;width:359px;height:32px">
    <svg class="abs mut" style="left:8px;top:7px" width="16" height="16" viewBox="0 0 16 16"><path d="M.750 3h14.500a.75.75 0 0 1 0 1.500H.750a.75.75 0 0 1 0-1.500ZM3 7.750A.75.75 0 0 1 3.750 7h8.500a.75.75 0 0 1 0 1.500h-8.500A.75.75 0 0 1 3 7.750Zm3 4a.75.75 0 0 1 .750-.750h2.500a.75.75 0 0 1 0 1.500h-2.500a.75.75 0 0 1-.750-.750Z"/></svg>
    <div class="t mut" id="fs" style="left:32px;top:5px;letter-spacing:.23px">Filter symbols</div>
    <div class="kbd" style="left:331px;top:6px;width:20px;height:20px;line-height:18px;font-size:12px;border-radius:6px">R</div>
  </div>
  <div class="fn" style="top:136px">func</div><div class="sn" id="s0" style="top:137px">requireNonEmptyValue</div>
  <div class="fn" style="top:168px">func</div><div class="sn" id="s1" style="top:169px">shouldForcePrePush</div>
  <div class="fn" style="top:200px">func</div><div class="sn" id="s2" style="top:201px">buildCacheKey</div>
  <div class="fn" style="top:232px">func</div><div class="sn" id="s3" style="top:233px">getCacheRoot</div>
  <div class="fn" style="top:264px">func</div><div class="sn" id="s4" style="top:265px">getCacheFilePath</div>
  <div class="fn" style="top:297px">func</div><div class="sn" id="s5" style="top:298px">createCacheRecord</div>
  <div class="fn" style="top:329px">func</div><div class="sn" id="s6" style="top:330px">readCacheRecord</div>
  <div class="fn" style="top:361px">func</div><div class="sn" id="s7" style="top:362px">writeCacheRecord</div>
  <div class="fn" style="top:393px">func</div><div class="sn" id="s8" style="top:394px">runCli</div>
</div>

</div>
</body></html>
